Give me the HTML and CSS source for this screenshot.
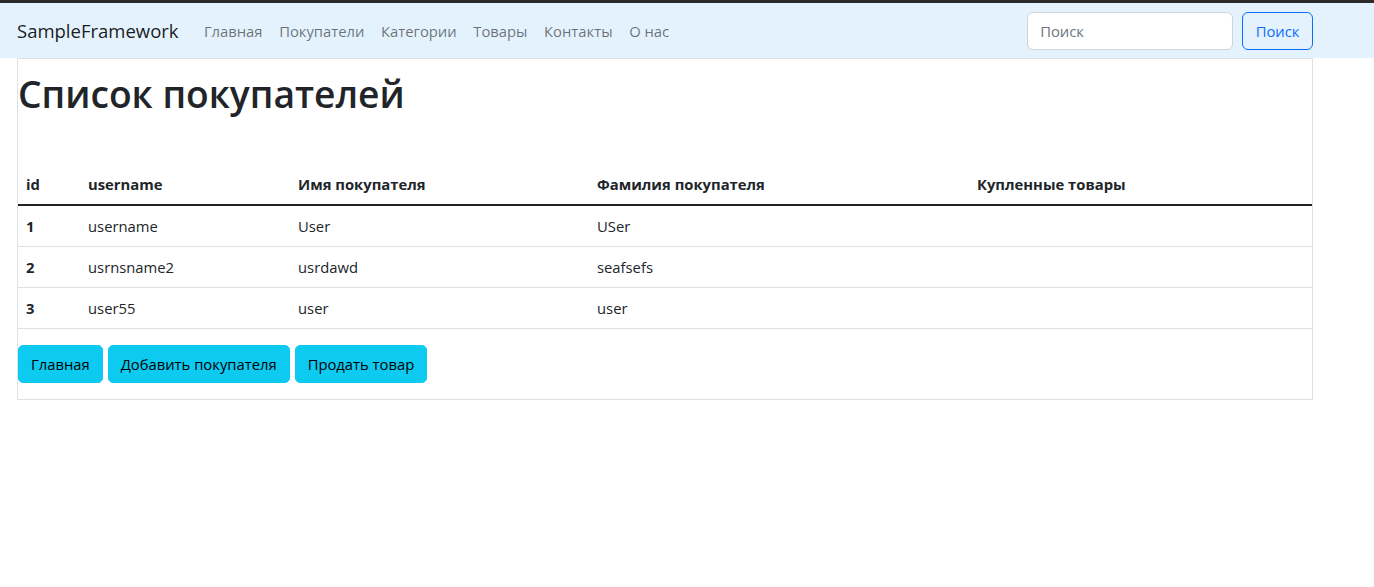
FILE: index.html
```html
<!DOCTYPE html>
<html lang="ru">
<head>
<meta charset="utf-8">
<title>Список покупателей</title>
<link rel="stylesheet" href="styles.css">
</head>
<body>
<nav class="navbar">
  <a class="brand" href="#">SampleFramework</a>
  <ul class="nav">
    <li><a href="#">Главная</a></li>
    <li><a href="#">Покупатели</a></li>
    <li><a href="#">Категории</a></li>
    <li><a href="#">Товары</a></li>
    <li><a href="#">Контакты</a></li>
    <li><a href="#">О нас</a></li>
  </ul>
  <form class="search">
    <input class="search-input" type="search" placeholder="Поиск">
    <button class="search-btn" type="button">Поиск</button>
  </form>
</nav>
<main class="container">
  <h1 class="title">Список покупателей</h1>
  <table class="table">
    <thead>
      <tr>
        <th class="c-id">id</th>
        <th class="c-user">username</th>
        <th class="c-name">Имя покупателя</th>
        <th class="c-last">Фамилия покупателя</th>
        <th class="c-goods">Купленные товары</th>
      </tr>
    </thead>
    <tbody>
      <tr><th>1</th><td>username</td><td>User</td><td>USer</td><td></td></tr>
      <tr><th>2</th><td>usrnsname2</td><td>usrdawd</td><td>seafsefs</td><td></td></tr>
      <tr><th>3</th><td>user55</td><td>user</td><td>user</td><td></td></tr>
    </tbody>
  </table>
  <div class="actions">
    <a class="btn" href="#">Главная</a>
    <a class="btn" href="#">Добавить покупателя</a>
    <a class="btn" href="#">Продать товар</a>
  </div>
</main>
</body>
</html>
```
FILE: styles.css
```css
* { box-sizing: border-box; }
html, body { margin: 0; padding: 0; }
body {
  font-family: "Open Sans", "Noto Sans", sans-serif;
  font-size: 14.8px;
  line-height: 24px;
  color: #212529;
  background: #fff;
  border-top: 3px solid #2b2b2b;
}
a { text-decoration: none; }

.navbar {
  display: flex;
  align-items: center;
  background: #e3f2fd;
  height: 55px;
  padding: 1px 61px 0 17px;
}
.brand {
  font-size: 18.5px;
  line-height: 30px;
  color: rgba(0,0,0,.9);
  margin-right: 17px;
}
.nav {
  display: flex;
  list-style: none;
  margin: 0;
  padding: 0;
  flex: 1;
}
.nav a {
  display: block;
  padding: 8px 8.3px;
  color: rgba(0,0,0,.55);
}
.search { display: flex; gap: 9px; }
.search-input {
  width: 206px;
  height: 38px;
  padding: 6px 12px;
  font: inherit;
  color: #212529;
  background: #fff;
  border: 1px solid #ced4da;
  border-radius: 6px;
}
.search-input::placeholder { color: #6c757d; }
.search-btn {
  height: 38px;
  padding: 6px 12.5px;
  font: inherit;
  color: #0d6efd;
  background: transparent;
  border: 1px solid #0d6efd;
  border-radius: 6px;
}

.container {
  width: 1296px;
  margin-left: 17px;
  border: 1px solid #dee2e6;
  padding-bottom: 16px;
}
.title {
  font-size: 37.2px;
  font-weight: 600;
  line-height: 48px;
  margin: 11px 0 0 0;
}
.table {
  width: 1294px;
  border-collapse: collapse;
  margin-top: 46px;
  margin-bottom: 16px;
  table-layout: fixed;
}
.table th, .table td {
  padding: 8px;
  text-align: left;
  border-bottom: 1px solid #dee2e6;
  vertical-align: top;
}
.table th { font-weight: 700; }
.table thead th { border-bottom: 2px solid #212529; }
.c-id { width: 62px; }
.c-user { width: 210px; }
.c-name { width: 299px; }
.c-last { width: 380px; }
.actions { display: flex; gap: 5px; }
.btn {
  display: inline-block;
  padding: 6px 12px;
  height: 38px;
  line-height: 24px;
  color: #000;
  background: #0dcaf0;
  border: 1px solid #0dcaf0;
  border-radius: 5px;
}
```
